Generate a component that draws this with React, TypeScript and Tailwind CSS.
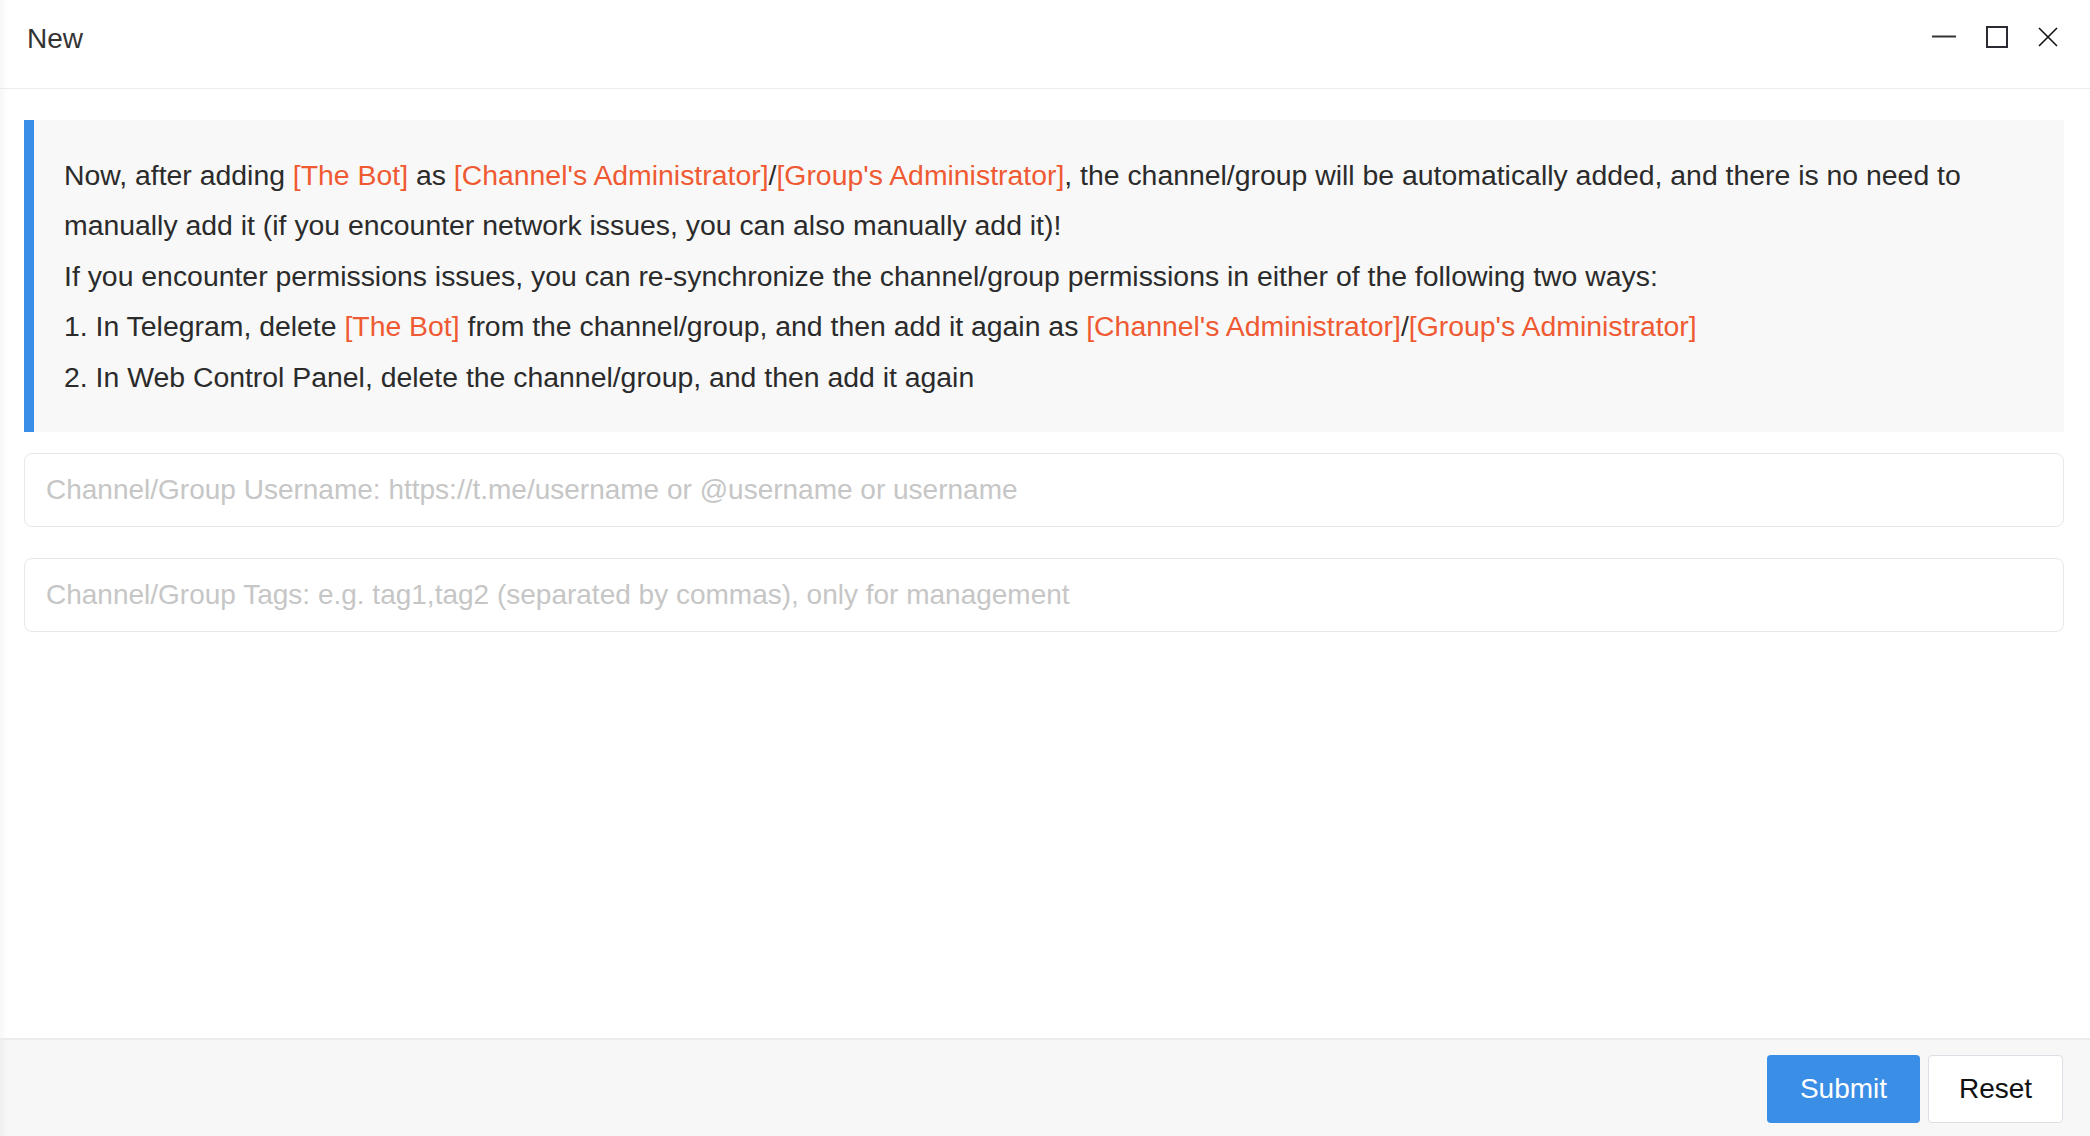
import React from "react";

const O = ({ children }: { children: React.ReactNode }) => (
  <span className="text-[#ef5a33]">{children}</span>
);

export default function App() {
  return (
    <div
      className="flex h-[1136px] w-[2090px] flex-col bg-white text-[#2b2b2b]"
      style={{ fontFamily: '"Liberation Sans", Arial, Helvetica, sans-serif' }}
    >
      {/* Header */}
      <div className="flex h-[89px] shrink-0 items-start justify-between border-b border-[#ececec] shadow-[inset_10px_0_10px_-10px_rgba(0,0,0,0.07)]">
        <div className="ml-[27px] mt-[23px] text-[28px] leading-[32px] text-[#333]">New</div>
        <div className="mr-[32px] mt-[26px] flex h-[22px] items-center gap-[30px]">
          <svg width="24" height="22" viewBox="0 0 24 22">
            <line x1="0" y1="10.5" x2="24" y2="10.5" stroke="#333" strokeWidth="2" />
          </svg>
          <svg width="22" height="22" viewBox="0 0 22 22">
            <rect x="1" y="1" width="20" height="20" fill="none" stroke="#2a2a33" strokeWidth="2" />
          </svg>
          <svg width="20" height="20" viewBox="0 0 20 20">
            <path d="M1 1 L19 19 M19 1 L1 19" stroke="#111" strokeWidth="1.6" fill="none" />
          </svg>
        </div>
      </div>

      {/* Body */}
      <div className="flex flex-1 flex-col pl-[24px] pr-[26px] pt-[31px] shadow-[inset_10px_0_10px_-10px_rgba(0,0,0,0.07)]">
        <div className="flex bg-[#f8f8f8]">
          <div className="w-[10px] shrink-0 bg-[#3a8ee6]" />
          <div className="py-[30px] pl-[30px] pr-[18px] text-[28.4px] leading-[50.4px] text-[#2b2b2b]">
            <p>
              Now, after adding <O>[The Bot]</O> as <O>[Channel's Administrator]</O>/
              <O>[Group's Administrator]</O>, the channel/group will be automatically added, and
              there is no need to manually add it (if you encounter network issues, you can also
              manually add it)!
            </p>
            <p>
              If you encounter permissions issues, you can re-synchronize the channel/group
              permissions in either of the following two ways:
            </p>
            <p>
              1. In Telegram, delete <O>[The Bot]</O> from the channel/group, and then add it again
              as <O>[Channel's Administrator]</O>/<O>[Group's Administrator]</O>
            </p>
            <p>2. In Web Control Panel, delete the channel/group, and then add it again</p>
          </div>
        </div>

        <input
          className="mt-[21px] h-[74px] w-full rounded-[8px] border-[1.5px] border-[#e8e8e8] bg-white px-[21px] text-[28px] outline-none placeholder:text-[#c6c6c6]"
          style={{ fontFamily: '"Liberation Sans", Arial, Helvetica, sans-serif' }}
          placeholder="Channel/Group Username: https://t.me/username or @username or username"
        />
        <input
          className="mt-[31px] h-[74px] w-full rounded-[8px] border-[1.5px] border-[#e8e8e8] bg-white px-[21px] text-[28px] outline-none placeholder:text-[#c6c6c6]"
          style={{ fontFamily: '"Liberation Sans", Arial, Helvetica, sans-serif' }}
          placeholder="Channel/Group Tags: e.g. tag1,tag2 (separated by commas), only for management"
        />
      </div>

      {/* Footer */}
      <div className="flex h-[98px] shrink-0 items-start justify-end gap-[8px] border-t-2 border-[#ececec] bg-[#f7f7f7] pr-[27px] pt-[15px] shadow-[inset_10px_0_10px_-10px_rgba(0,0,0,0.07)]">
        <button className="h-[68px] w-[153px] rounded-[4px] bg-[#3a8ee6] text-[28px] text-white">
          Submit
        </button>
        <button className="h-[68px] w-[135px] rounded-[4px] border-[1.5px] border-[#dcdfe6] bg-white text-[28px] text-[#111]">
          Reset
        </button>
      </div>
    </div>
  );
}
